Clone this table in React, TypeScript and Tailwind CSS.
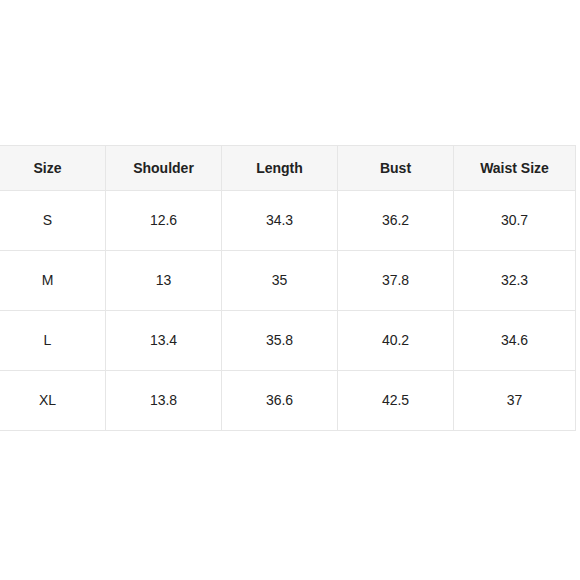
import React from "react";

const headers = ["Size", "Shoulder", "Length", "Bust", "Waist Size"];
const rows = [
  ["S", "12.6", "34.3", "36.2", "30.7"],
  ["M", "13", "35", "37.8", "32.3"],
  ["L", "13.4", "35.8", "40.2", "34.6"],
  ["XL", "13.8", "36.6", "42.5", "37"],
];
const widths = ["w-[116px]", "w-[116px]", "w-[116px]", "w-[116px]", "w-[122px]"];

const App: React.FC = () => {
  return (
    <div className="w-[580px] h-[580px] bg-white overflow-hidden font-['Liberation_Sans',Arial,sans-serif] text-[#222]">
      <table className="mt-[145px] ml-[-11px] border-collapse table-fixed text-[14px]">
        <colgroup>
          {widths.map((w, i) => (
            <col key={i} className={w} />
          ))}
        </colgroup>
        <thead>
          <tr className="bg-[#f6f6f6]">
            {headers.map((h) => (
              <th key={h} className="h-[45px] border border-[#e6e6e6] font-bold text-center p-0">
                {h}
              </th>
            ))}
          </tr>
        </thead>
        <tbody>
          {rows.map((r) => (
            <tr key={r[0]}>
              {r.map((c, i) => (
                <td key={i} className="h-[60px] border border-[#e6e6e6] text-center p-0">
                  {c}
                </td>
              ))}
            </tr>
          ))}
        </tbody>
      </table>
    </div>
  );
};

export default App;
